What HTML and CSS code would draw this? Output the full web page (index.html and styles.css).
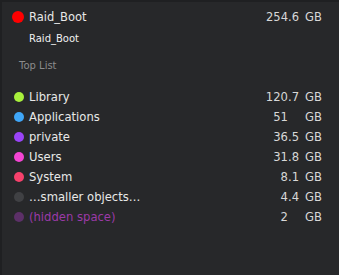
FILE: index.html
```html
<!DOCTYPE html>
<html>
<head>
<meta charset="utf-8">
<link rel="stylesheet" href="styles.css">
</head>
<body>
<div class="panel">
  <div class="vol">
    <span class="dot big" style="background:#fe0000"></span>
    <span class="name">Raid_Boot</span>
    <span class="num"><span class="int">254</span><span class="frac">.6</span></span>
    <span class="unit">GB</span>
  </div>
  <div class="sub">Raid_Boot</div>
  <div class="section">Top List</div>
  <div class="list">
    <div class="row"><span class="dot" style="background:#a8f03c"></span><span class="name">Library</span><span class="num"><span class="int">120</span><span class="frac">.7</span></span><span class="unit">GB</span></div>
    <div class="row"><span class="dot" style="background:#3fa6f7"></span><span class="name">Applications</span><span class="num"><span class="int">51</span><span class="frac"></span></span><span class="unit">GB</span></div>
    <div class="row"><span class="dot" style="background:#9a44f7"></span><span class="name">private</span><span class="num"><span class="int">36</span><span class="frac">.5</span></span><span class="unit">GB</span></div>
    <div class="row"><span class="dot" style="background:#f345d3"></span><span class="name">Users</span><span class="num"><span class="int">31</span><span class="frac">.8</span></span><span class="unit">GB</span></div>
    <div class="row"><span class="dot" style="background:#f6416c"></span><span class="name">System</span><span class="num"><span class="int">8</span><span class="frac">.1</span></span><span class="unit">GB</span></div>
    <div class="row"><span class="dot" style="background:#404144"></span><span class="name">…smaller objects…</span><span class="num"><span class="int">4</span><span class="frac">.4</span></span><span class="unit">GB</span></div>
    <div class="row hidden"><span class="dot" style="background:#5c3068"></span><span class="name">(hidden space)</span><span class="num"><span class="int">2</span><span class="frac"></span></span><span class="unit">GB</span></div>
  </div>
</div>
</body>
</html>
```
FILE: styles.css
```css
html, body {
  margin: 0;
  padding: 0;
  background: #27282a;
}
body {
  width: 339px;
  height: 275px;
  overflow: hidden;
  font-family: "DejaVu Sans", sans-serif;
  color: #e8e8e8;
}
.panel {
  box-sizing: border-box;
  width: 339px;
  height: 275px;
  border-top: 2px solid #1f2022;
  border-left: 2px solid #1f2022;
  background: #27282a;
}
.vol, .row {
  display: flex;
  align-items: center;
}
.vol {
  height: 30px;
  line-height: 30px;
  padding-left: 10px;
  font-size: 11.5px;
}
.dot {
  width: 10px;
  height: 10px;
  border-radius: 50%;
  flex: none;
  margin-right: 5px;
}
.dot.big {
  width: 12px;
  height: 12px;
  margin-right: 5px;
}
.name {
  flex: 1;
  white-space: nowrap;
}
.num {
  display: flex;
  color: #d8d8d8;
}
.int {
  width: 60px;
  text-align: right;
}
.frac {
  width: 11px;
}
.unit {
  width: 40px;
  padding-left: 6px;
  box-sizing: border-box;
  color: #d8d8d8;
}
.sub {
  height: 13px;
  line-height: 13px;
  padding-left: 27px;
  font-size: 10px;
  color: #f0f0f0;
}
.section {
  padding-top: 13.5px;
  height: 13px;
  line-height: 13px;
  padding-left: 17px;
  font-size: 10px;
  color: #8c8c8c;
}
.list {
  padding-top: 15.2px;
}
.row {
  height: 20px;
  line-height: 20px;
  padding-left: 12px;
  font-size: 11.6px;
}
.hidden .name {
  color: #9b3aa8;
}
```
